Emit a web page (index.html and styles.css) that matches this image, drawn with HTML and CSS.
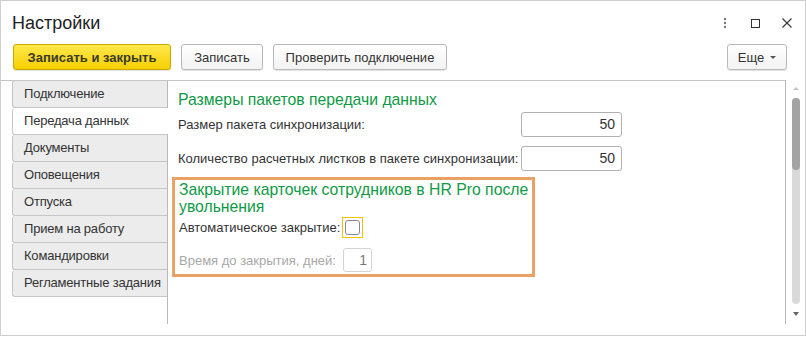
FILE: index.html
```html
<!DOCTYPE html>
<html lang="ru">
<head>
  <meta charset="UTF-8" />
  <title>Настройки</title>
  <link rel="stylesheet" href="styles.css">
</head>
<body>
  <div class="window">
    <div class="titlebar">
      <h1>Настройки</h1>
      <div class="win-icons">
        <svg class="kebab" width="4" height="12" viewBox="0 0 4 12"><circle cx="2" cy="2" r="1.2" fill="#777"/><circle cx="2" cy="6" r="1.2" fill="#777"/><circle cx="2" cy="10" r="1.2" fill="#777"/></svg>
        <svg class="maximize" width="9" height="9" viewBox="0 0 9 9"><rect x="0.5" y="0.5" width="8" height="8" fill="none" stroke="#333"/></svg>
        <svg width="10" height="10" viewBox="0 0 10 10"><path d="M0.5 0.5 L9.5 9.5 M9.5 0.5 L0.5 9.5" stroke="#333" stroke-width="1.1"/></svg>
      </div>
    </div>

    <div class="toolbar">
      <button class="btn primary">Записать и закрыть</button>
      <button class="btn save">Записать</button>
      <button class="btn check-conn">Проверить подключение</button>
      <button class="btn more">Еще <span class="caret"></span></button>
    </div>

    <div class="main">
      <div class="tabs">
        <div class="tab">Подключение</div>
        <div class="tab active">Передача данных</div>
        <div class="tab">Документы</div>
        <div class="tab">Оповещения</div>
        <div class="tab">Отпуска</div>
        <div class="tab">Прием на работу</div>
        <div class="tab">Командировки</div>
        <div class="tab">Регламентные задания</div>
      </div>

      <div class="panel">
        <h2 class="group-title">Размеры пакетов передачи данных</h2>
        <div class="row">
          <span class="label">Размер пакета синхронизации:</span>
          <div class="input num">50</div>
        </div>
        <div class="row">
          <span class="label">Количество расчетных листков в пакете синхронизации:</span>
          <div class="input num">50</div>
        </div>

        <div class="highlight">
          <h2 class="group-title">Закрытие карточек сотрудников в HR Pro после<br>увольнения</h2>
          <div class="row small">
            <span class="label">Автоматическое закрытие:</span>
            <span class="check-focus"><span class="check"></span></span>
          </div>
          <div class="row small">
            <span class="label disabled">Время до закрытия, дней:</span>
            <div class="input days">1</div>
          </div>
        </div>
      </div>

      <div class="scrollbar">
        <span class="arrow up"></span>
        <div class="track"><div class="thumb"></div></div>
        <span class="arrow down"></span>
      </div>
    </div>
  </div>
</body>
</html>
```

FILE: styles.css
```css
* { box-sizing: border-box; margin: 0; padding: 0; }
body { font-family: "Liberation Sans", Arial, sans-serif; font-size: 13px; color: #333; background: #fff; }

.window { width: 806px; height: 336px; border: 1px solid #cfcfcf; background: #fff; }

.titlebar { display: flex; align-items: center; justify-content: space-between; height: 43px; padding: 0 13px 0 11px; }
.titlebar h1 { font-size: 18px; font-weight: normal; color: #1e1e1e; padding-top: 1px; }
.win-icons { display: flex; align-items: center; padding-top: 1px; }
.win-icons .kebab { margin-right: 24px; }
.win-icons .maximize { margin-right: 22px; }

.toolbar { display: flex; gap: 10px; padding: 0 0 0 12px; height: 26px; }
.btn { height: 26px; padding: 0; white-space: nowrap; border: 1px solid #b9b9b9; border-radius: 3px; background: linear-gradient(#ffffff, #f2f2f2); font-family: inherit; font-size: 13px; color: #333; box-shadow: 0 1px 1px rgba(0,0,0,0.12); }
.btn.primary { width: 158px; font-weight: bold; background: linear-gradient(#ffe84d, #f5cf00); border-color: #c9a800; color: #3a3a2a; }
.btn.save { width: 82px; }
.btn.check-conn { width: 174px; }
.btn.more { margin-left: auto; margin-right: 18px; width: 60px; padding: 0 8px; display: flex; align-items: center; justify-content: center; gap: 6px; }
.caret { border-left: 3px solid transparent; border-right: 3px solid transparent; border-top: 3px solid #555; }

.main { display: flex; margin-top: 10px; height: 244px; }

.tabs { width: 167px; padding-left: 11px; border-top: 1px solid #c4c4c4; border-right: 1px solid #b9b9b9; display: flex; flex-direction: column; }
.tab { height: 27px; line-height: 26px; padding-left: 11px; background: #ececec; border: 1px solid #c6c6c6; border-top: none; border-right: none; border-radius: 3px 0 0 3px; color: #333; white-space: nowrap; letter-spacing: -0.2px; }
.tab:first-child { border-top: 1px solid #c6c6c6; margin-top: -1px; height: 28px; }
.tab.active { background: #fff; margin-right: -1px; }

.panel { width: 618px; border-top: 1px solid #c4c4c4; border-right: 1px solid #b9b9b9; padding: 9px 0 0 10px; }
.group-title { font-size: 15.75px; font-weight: normal; color: #0f9a45; line-height: 19px; white-space: nowrap; }
.row { display: flex; align-items: center; justify-content: space-between; width: 444px; margin-top: 3px; }
.row + .row { margin-top: 9px; }
.input { height: 25px; border: 1px solid #b0b0b0; border-radius: 3px; background: #fff; line-height: 23px; text-align: right; padding-right: 6px; color: #333; font-size: 14px; }
.input.num { width: 101px; }

.highlight { margin: 6px 0 0 -6px; width: 363px; border: 3px solid #e9a263; padding: 1px 0 2px 4px; }
.highlight .group-title { line-height: 17px; }
.row.small { justify-content: flex-start; width: auto; margin-top: 2px; }
.row.small + .row.small { margin-top: 10px; }
.check-focus { margin-left: 2px; width: 21px; height: 21px; border: 1px solid #f2c200; display: flex; align-items: center; justify-content: center; }
.check { width: 15px; height: 15px; border: 1px solid #8a8a8a; border-radius: 3px; background: #fff; }
.label.disabled { color: #a8a8a8; }
.input.days { width: 29px; height: 24px; margin-left: 7px; border-color: #d4d4d4; color: #777; padding-right: 4px; }

.scrollbar { width: 19px; display: flex; flex-direction: column; align-items: center; padding: 7px 0 8px 0; }
.arrow { border-left: 3px solid transparent; border-right: 3px solid transparent; }
.arrow.up { border-bottom: 3px solid #c4c4c4; margin-bottom: 8px; }
.arrow.down { border-top: 4px solid #666; margin-top: 8px; }
.track { flex: 1; width: 8px; margin-left: 1px; background: #d9d9d9; border-radius: 4px; }
.thumb { height: 72px; background: #a3a3a3; border-radius: 4px; }
```
